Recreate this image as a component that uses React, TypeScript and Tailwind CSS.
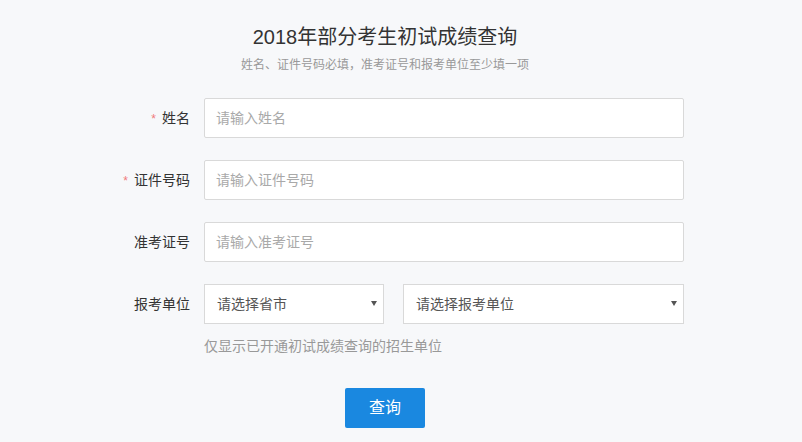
import React, { useState } from 'react';

const font = { fontFamily: '"Liberation Sans", "Noto Sans CJK SC", sans-serif' };

type FieldProps = { label: string; required?: boolean; children: React.ReactNode };

const Field = ({ label, required, children }: FieldProps) => (
  <div className="flex items-center">
    <label className="w-[72px] shrink-0 text-right text-[14px] leading-[20px] text-[#333]">
      {required && <span className="mr-[6px] text-[#f07a7a] text-[12px]">*</span>}
      {label}
    </label>
    <div className="ml-[14px] w-[480px]">{children}</div>
  </div>
);

const TextInput = ({ placeholder }: { placeholder: string }) => (
  <input
    type="text"
    placeholder={placeholder}
    className="block h-[40px] w-full rounded-[2px] border border-[#d9d9d9] bg-white px-[11px] text-[14px] text-[#333] outline-none placeholder:text-[#a9a9a9]"
  />
);

const Select = ({ placeholder, className }: { placeholder: string; className: string }) => (
  <div className={`relative ${className}`}>
    <select className="block h-[40px] w-full appearance-none border border-[#d9d9d9] bg-white pl-[12px] pr-[24px] text-[14px] text-[#555] outline-none">
      <option>{placeholder}</option>
    </select>
    <span className="pointer-events-none absolute right-[7px] top-[17px] h-0 w-0 border-x-[3px] border-t-[5px] border-x-transparent border-t-[#555]" />
  </div>
);

const App: React.FC = () => {
  const [submitted, setSubmitted] = useState(false);

  return (
    <div className="min-h-[442px] w-full bg-[#f7f8fa]" style={font}>
      <div className="pr-[32px] pt-[22px] text-center">
        <h1 className="text-[20px] leading-[30px] font-normal text-[#333]">2018年部分考生初试成绩查询</h1>
        <p className="mt-[3px] text-[12px] leading-[20px] text-[#999]">姓名、证件号码必填，准考证号和报考单位至少填一项</p>
      </div>

      <form
        className="mx-auto mt-[23px] flex w-[566px] flex-col gap-[22px]"
        onSubmit={e => { e.preventDefault(); setSubmitted(true); }}
      >
        <Field label="姓名" required>
          <TextInput placeholder="请输入姓名" />
        </Field>
        <Field label="证件号码" required>
          <TextInput placeholder="请输入证件号码" />
        </Field>
        <Field label="准考证号">
          <TextInput placeholder="请输入准考证号" />
        </Field>
        <Field label="报考单位">
          <div className="flex gap-[19px]">
            <Select placeholder="请选择省市" className="w-[180px]" />
            <Select placeholder="请选择报考单位" className="flex-1" />
          </div>
        </Field>
      </form>

      <div className="mx-auto mt-[12px] w-[566px] pl-[86px] text-[14px] leading-[20px] text-[#999]">
        仅显示已开通初试成绩查询的招生单位
      </div>

      <div className="mt-[32px] flex justify-center pr-[32px]">
        <button
          type="button"
          onClick={() => setSubmitted(!submitted)}
          className="h-[40px] w-[80px] rounded-[2px] bg-[#1a88e0] text-[16px] text-white"
        >
          查询
        </button>
      </div>
    </div>
  );
};

export default App;
